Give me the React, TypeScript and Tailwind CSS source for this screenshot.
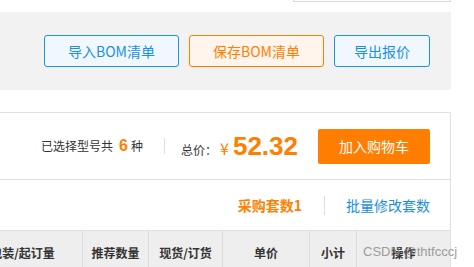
import React from 'react';

const cols = [
  { label: '包装/起订量', w: 'w-[120px]' },
  { label: '推荐数量', w: 'w-[66px]' },
  { label: '现货/订货', w: 'w-[74px]' },
  { label: '单价', w: 'w-[87px]' },
  { label: '小计', w: 'w-[47px]' },
  { label: '操作', w: 'w-[94px]' },
];

export default function App() {
  return (
    <div className="relative w-[474px] h-[267px] overflow-hidden bg-white text-[#333] font-['Noto_Sans_CJK_SC',sans-serif]">
      <div className="w-[1200px] ml-[-749px]">
        {/* search box bottom edge */}
        <div className="h-[12px] flex justify-end">
          <div className="w-[158px] h-[2px] border-x border-b border-[#d9d9d9]" />
        </div>

        {/* BOM toolbar */}
        <div className="h-[78px] bg-[#f2f2f2] flex items-center justify-end gap-[10px] pr-[21px]">
          <button className="w-[135px] h-[32px] rounded-[3px] border border-[#1a94e6] bg-[#f0f8fe] text-[14px] text-[#1a8fe3]">
            导入BOM清单
          </button>
          <button className="w-[135px] h-[32px] rounded-[3px] border border-[#ff7f00] bg-[#fff5ec] text-[14px] text-[#ff7f00]">
            保存BOM清单
          </button>
          <button className="w-[96px] h-[32px] rounded-[3px] border border-[#1a94e6] bg-[#f0f8fe] text-[14px] text-[#1a8fe3]">
            导出报价
          </button>
        </div>

        <div className="h-[22px]" />

        <div className="border-t border-r border-[#e0e0e0]">
          {/* total row */}
          <div className="h-[67px] border-b border-[#e0e0e0] flex items-center justify-end pr-[20px]">
            <span className="text-[12px] flex items-baseline">
              已选择型号共
              <b className="text-[16px] text-[#ff7f00] ml-[6px] mr-[3px] font-['Liberation_Sans',sans-serif]">6</b>
              种
            </span>
            <span className="w-px h-[16px] bg-[#ddd] ml-[21px] mr-[16px]" />
            <span className="flex items-baseline">
              <span className="text-[12px]">总价：</span>
              <span className="text-[16px] text-[#ff7f00] ml-[3px] mr-[4px]">¥</span>
              <b className="text-[26px] text-[#ff7f00] font-['Liberation_Sans',sans-serif] leading-none">52.32</b>
            </span>
            <button className="ml-[20px] w-[112px] h-[35px] rounded-[2px] bg-[#ff7d00] text-white text-[14px]">
              加入购物车
            </button>
          </div>

          {/* sets row */}
          <div className="h-[50px] flex items-center justify-end pr-[20px] text-[14px]">
            <b className="text-[#ff7f00]">采购套数1</b>
            <span className="w-px h-[19px] bg-[#ddd] ml-[22px] mr-[21px]" />
            <span className="text-[#1a8fe3]">批量修改套数</span>
          </div>

          {/* table header */}
          <div className="h-[44px] flex justify-end bg-[#eeeeee] border-t border-[#e0e0e0]">
            {cols.map((c) => (
              <div key={c.label} className={`${c.w} border-l border-[#dcdcdc] flex items-center justify-center text-[12px] font-bold`}>
                {c.label}
              </div>
            ))}
          </div>
        </div>
      </div>

      <span className="absolute left-[363px] top-[242px] text-[13px] text-[#888] opacity-80 font-['Liberation_Sans',sans-serif]">
        CSDN @thtfcccj
      </span>
    </div>
  );
}
